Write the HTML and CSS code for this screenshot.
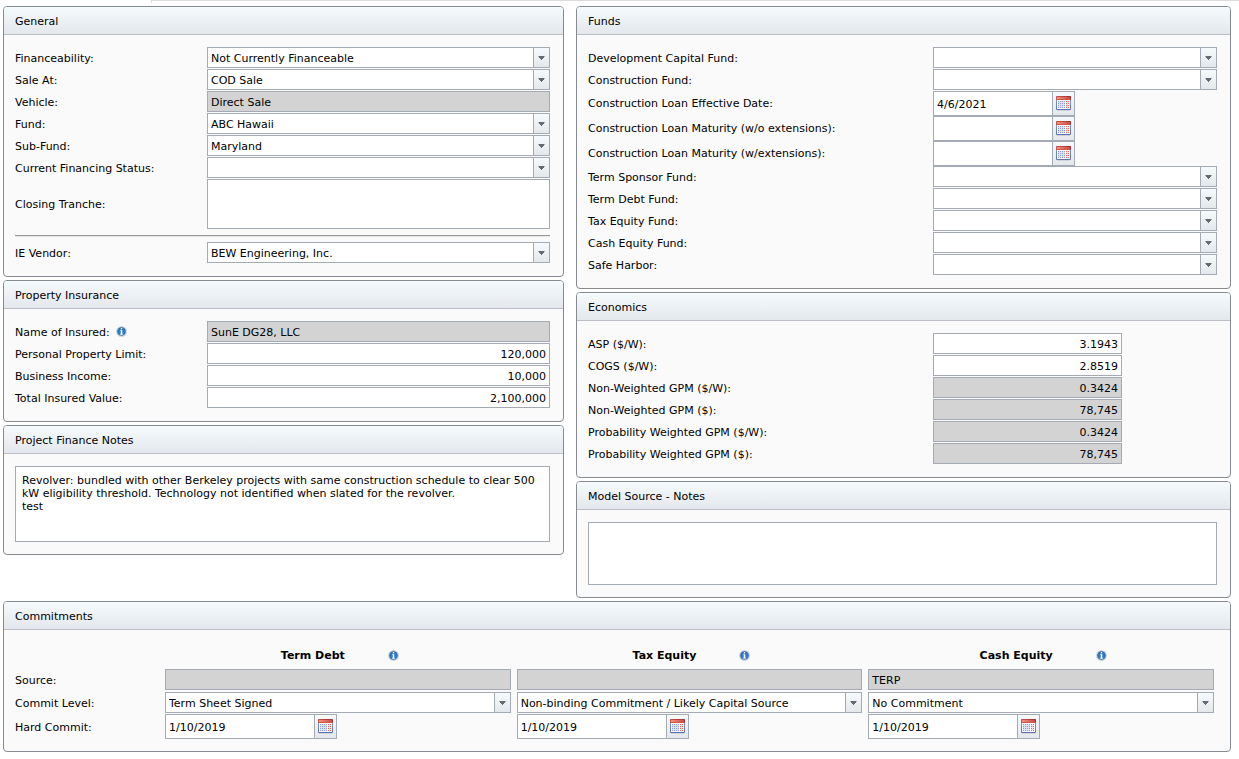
FILE: index.html
```html
<!DOCTYPE html>
<html lang="en">
<head>
    <meta charset="UTF-8">
    <meta name="viewport" content="width=device-width, initial-scale=1.0">
    <title>Project Finance</title>
    <link rel="stylesheet" href="styles.css">
</head>
<body>
    <!-- Shared icons -->
    <svg class="sprite" aria-hidden="true">
        <defs>
            <linearGradient id="calTop" x1="0" y1="0" x2="1" y2="0">
                <stop offset="0" stop-color="#cf5248" />
                <stop offset="1" stop-color="#a52d2d" />
            </linearGradient>
            <linearGradient id="calBand" x1="0" y1="0" x2="1" y2="0">
                <stop offset="0" stop-color="#ee9384" />
                <stop offset="1" stop-color="#cb4a42" />
            </linearGradient>
            <linearGradient id="calSide" x1="0" y1="0" x2="0" y2="1">
                <stop offset="0" stop-color="#8fa3d6" />
                <stop offset="1" stop-color="#5c70ae" />
            </linearGradient>
            <radialGradient id="infoFill" cx="0.5" cy="0.6" r="0.6">
                <stop offset="0" stop-color="#3f93e0" />
                <stop offset="1" stop-color="#2462ac" />
            </radialGradient>
        </defs>
        <symbol id="calendar" viewBox="0 0 15 15">
            <rect y="14" x="1" width="13" height="1" fill="#cfd2d8" />
            <rect width="15" height="14" rx="1" fill="url(#calSide)" />
            <rect x="1" y="4" width="13" height="9" fill="#f8faff" />
            <rect x="2" y="5" width="7" height="7" fill="#dbe4f4" />
            <rect x="10" y="5" width="3" height="7" fill="#fbe3dc" />
            <path d="M2 5.5h7M2 7.5h7M2 9.5h7M2 11.5h7" stroke="#8d9dcb" stroke-dasharray="1" />
            <path d="M10 5.5h3M10 7.5h3M10 9.5h3M10 11.5h3" stroke="#ee6655" stroke-dasharray="1" />
            <rect width="15" height="4" rx="1" fill="url(#calTop)" />
            <rect x="1" y="1" width="13" height="2" fill="url(#calBand)" />
            <rect x="1" y="3" width="13" height="1" fill="#d65748" />
        </symbol>
        <symbol id="info" viewBox="0 0 11 11">
            <circle cx="5.5" cy="5.5" r="5.5" fill="#d3d5d8" />
            <circle cx="5.5" cy="5.5" r="4.3" fill="url(#infoFill)" />
            <rect x="4.8" y="2" width="1.4" height="1.4" fill="#fff" />
            <path d="M4.2 4.2h2v3.6h.6v.9H4.2v-.9h.6V5h-.6z" fill="#fff" />
        </symbol>
    </svg>

    <div class="tab-edge"></div>

    <form class="page">
        <div class="columns">
            <div class="column">
                <section class="panel">
                    <h2>General</h2>
                    <div class="panel-body">
                        <div class="row">
                            <label for="financeability">Financeability:</label>
                            <select id="financeability"><option>Not Currently Financeable</option></select>
                        </div>
                        <div class="row">
                            <label for="saleAt">Sale At:</label>
                            <select id="saleAt"><option>COD Sale</option></select>
                        </div>
                        <div class="row">
                            <label for="vehicle">Vehicle:</label>
                            <input type="text" id="vehicle" value="Direct Sale" readonly>
                        </div>
                        <div class="row">
                            <label for="fund">Fund:</label>
                            <select id="fund"><option>ABC Hawaii</option></select>
                        </div>
                        <div class="row">
                            <label for="subFund">Sub-Fund:</label>
                            <select id="subFund"><option>Maryland</option></select>
                        </div>
                        <div class="row">
                            <label for="financingStatus">Current Financing Status:</label>
                            <select id="financingStatus"><option></option></select>
                        </div>
                        <div class="row">
                            <label for="closingTranche">Closing Tranche:</label>
                            <textarea id="closingTranche" class="tranche"></textarea>
                        </div>
                        <hr>
                        <div class="row">
                            <label for="ieVendor">IE Vendor:</label>
                            <select id="ieVendor"><option>BEW Engineering, Inc.</option></select>
                        </div>
                    </div>
                </section>

                <section class="panel">
                    <h2>Property Insurance</h2>
                    <div class="panel-body">
                        <div class="row">
                            <label for="insured">Name of Insured: <svg class="info"><use href="#info" /></svg></label>
                            <input type="text" id="insured" value="SunE DG28, LLC" readonly>
                        </div>
                        <div class="row">
                            <label for="propertyLimit">Personal Property Limit:</label>
                            <input type="text" id="propertyLimit" class="number" value="120,000">
                        </div>
                        <div class="row">
                            <label for="businessIncome">Business Income:</label>
                            <input type="text" id="businessIncome" class="number" value="10,000">
                        </div>
                        <div class="row">
                            <label for="insuredValue">Total Insured Value:</label>
                            <input type="text" id="insuredValue" class="number" value="2,100,000">
                        </div>
                    </div>
                </section>

                <section class="panel">
                    <h2 id="financeNotesTitle">Project Finance Notes</h2>
                    <div class="panel-body">
                        <textarea class="finance-notes" aria-labelledby="financeNotesTitle">Revolver: bundled with other Berkeley projects with same construction schedule to clear 500 kW eligibility threshold. Technology not identified when slated for the revolver.
test</textarea>
                    </div>
                </section>
            </div>

            <div class="column column-wide">
                <section class="panel">
                    <h2>Funds</h2>
                    <div class="panel-body">
                        <div class="row">
                            <label for="devFund">Development Capital Fund:</label>
                            <select id="devFund"><option></option></select>
                        </div>
                        <div class="row">
                            <label for="constructionFund">Construction Fund:</label>
                            <select id="constructionFund"><option></option></select>
                        </div>
                        <div class="row row-date">
                            <label for="loanEffective">Construction Loan Effective Date:</label>
                            <div class="date">
                                <input type="text" id="loanEffective" value="4/6/2021">
                                <button type="button" aria-label="Pick date"><svg><use href="#calendar" /></svg></button>
                            </div>
                        </div>
                        <div class="row row-date">
                            <label for="maturityWithout">Construction Loan Maturity (w/o extensions):</label>
                            <div class="date">
                                <input type="text" id="maturityWithout">
                                <button type="button" aria-label="Pick date"><svg><use href="#calendar" /></svg></button>
                            </div>
                        </div>
                        <div class="row row-date">
                            <label for="maturityWith">Construction Loan Maturity (w/extensions):</label>
                            <div class="date">
                                <input type="text" id="maturityWith">
                                <button type="button" aria-label="Pick date"><svg><use href="#calendar" /></svg></button>
                            </div>
                        </div>
                        <div class="row">
                            <label for="sponsorFund">Term Sponsor Fund:</label>
                            <select id="sponsorFund"><option></option></select>
                        </div>
                        <div class="row">
                            <label for="debtFund">Term Debt Fund:</label>
                            <select id="debtFund"><option></option></select>
                        </div>
                        <div class="row">
                            <label for="taxFund">Tax Equity Fund:</label>
                            <select id="taxFund"><option></option></select>
                        </div>
                        <div class="row">
                            <label for="cashFund">Cash Equity Fund:</label>
                            <select id="cashFund"><option></option></select>
                        </div>
                        <div class="row">
                            <label for="safeHarbor">Safe Harbor:</label>
                            <select id="safeHarbor"><option></option></select>
                        </div>
                    </div>
                </section>

                <section class="panel economics">
                    <h2>Economics</h2>
                    <div class="panel-body">
                        <div class="row">
                            <label for="asp">ASP ($/W):</label>
                            <input type="text" id="asp" class="number" value="3.1943">
                        </div>
                        <div class="row">
                            <label for="cogs">COGS ($/W):</label>
                            <input type="text" id="cogs" class="number" value="2.8519">
                        </div>
                        <div class="row">
                            <label for="gpmWatt">Non-Weighted GPM ($/W):</label>
                            <input type="text" id="gpmWatt" class="number" value="0.3424" readonly>
                        </div>
                        <div class="row">
                            <label for="gpm">Non-Weighted GPM ($):</label>
                            <input type="text" id="gpm" class="number" value="78,745" readonly>
                        </div>
                        <div class="row">
                            <label for="probGpmWatt">Probability Weighted GPM ($/W):</label>
                            <input type="text" id="probGpmWatt" class="number" value="0.3424" readonly>
                        </div>
                        <div class="row">
                            <label for="probGpm">Probability Weighted GPM ($):</label>
                            <input type="text" id="probGpm" class="number" value="78,745" readonly>
                        </div>
                    </div>
                </section>

                <section class="panel">
                    <h2 id="modelNotesTitle">Model Source - Notes</h2>
                    <div class="panel-body">
                        <textarea class="model-notes" aria-labelledby="modelNotesTitle"></textarea>
                    </div>
                </section>
            </div>
        </div>

        <section class="panel commitments">
            <h2>Commitments</h2>
            <div class="panel-body">
                <table>
                    <thead>
                        <tr>
                            <td></td>
                            <th id="termDebt" scope="col"><span>Term Debt <svg class="info"><use href="#info" /></svg></span></th>
                            <th id="taxEquity" scope="col"><span>Tax Equity <svg class="info"><use href="#info" /></svg></span></th>
                            <th id="cashEquity" scope="col"><span>Cash Equity <svg class="info"><use href="#info" /></svg></span></th>
                        </tr>
                    </thead>
                    <tbody>
                        <tr class="source">
                            <th id="source" scope="row">Source:</th>
                            <td><input type="text" aria-labelledby="termDebt source" readonly></td>
                            <td><input type="text" aria-labelledby="taxEquity source" readonly></td>
                            <td><input type="text" aria-labelledby="cashEquity source" value="TERP" readonly></td>
                        </tr>
                        <tr class="level">
                            <th id="level" scope="row">Commit Level:</th>
                            <td><select aria-labelledby="termDebt level"><option>Term Sheet Signed</option></select></td>
                            <td><select aria-labelledby="taxEquity level"><option>Non-binding Commitment / Likely Capital Source</option></select></td>
                            <td><select aria-labelledby="cashEquity level"><option>No Commitment</option></select></td>
                        </tr>
                        <tr>
                            <th id="hardCommit" scope="row">Hard Commit:</th>
                            <td>
                                <div class="date">
                                    <input type="text" aria-labelledby="termDebt hardCommit" value="1/10/2019">
                                    <button type="button" aria-label="Pick date"><svg><use href="#calendar" /></svg></button>
                                </div>
                            </td>
                            <td>
                                <div class="date">
                                    <input type="text" aria-labelledby="taxEquity hardCommit" value="1/10/2019">
                                    <button type="button" aria-label="Pick date"><svg><use href="#calendar" /></svg></button>
                                </div>
                            </td>
                            <td>
                                <div class="date">
                                    <input type="text" aria-labelledby="cashEquity hardCommit" value="1/10/2019">
                                    <button type="button" aria-label="Pick date"><svg><use href="#calendar" /></svg></button>
                                </div>
                            </td>
                        </tr>
                    </tbody>
                </table>
            </div>
        </section>
    </form>
</body>
</html>
```
FILE: styles.css
```css
* {
    box-sizing: border-box;
}
body {
    margin: 0;
    background: #fff;
    color: #000;
    font: 11px/13px Verdana, "DejaVu Sans", sans-serif;
}
.sprite {
    display: block;
    width: 0;
    height: 0;
}
.tab-edge {
    height: 3px;
    margin-left: 151px;
    border-top: 1px solid #dcdcdc;
    border-left: 1px solid #dcdcdc;
}
.page {
    display: flex;
    flex-direction: column;
    gap: 3px;
    padding: 3px 8px 7px 3px;
}
.columns {
    display: grid;
    grid-template-columns: 561fr 655fr;
    align-items: start;
    gap: 12px;
}
.column {
    display: flex;
    flex-direction: column;
    gap: 3px;
}

/* Panels */
.panel {
    border: 1px solid #868b91;
    border-radius: 4px;
    background: #fafafa;
    overflow: hidden;
}
.panel h2 {
    margin: 0;
    padding: 8px 11px 6px;
    border-bottom: 1px solid #bbbec4;
    background: linear-gradient(#f5fafd, #e4e8ec);
    font-size: 11px;
    font-weight: normal;
    line-height: 13px;
}
.panel-body {
    padding: 12px 13px 12px 11px;
}
.row {
    display: grid;
    grid-template-columns: 192px 1fr;
    align-items: center;
    padding-bottom: 1px;
}
.column-wide .row {
    grid-template-columns: 345px 1fr;
}
.row label {
    padding-top: 1px;
}
.row-date {
    padding-bottom: 0;
}
.row-date label {
    padding-top: 0;
}
hr {
    height: 2px;
    margin: 5px 0;
    border: 0;
    border-top: 1px solid #979797;
    border-bottom: 1px solid #e6e6e6;
}

/* Fields */
input,
select,
textarea {
    display: block;
    width: 100%;
    height: 21px;
    margin: 0;
    padding: 1px 3px 0;
    border: 1px solid #a5abb5;
    border-radius: 0;
    background: #fff;
    color: #000;
    font: inherit;
    outline: none;
}
input[readonly] {
    background: #d3d3d3;
}
select {
    appearance: none;
    padding-right: 18px;
    background:
        url("data:image/svg+xml,%3Csvg xmlns='http://www.w3.org/2000/svg' width='7' height='4'%3E%3Cpath d='M0 0h7v1H0z' fill='%23a4aab2'/%3E%3Cpath d='M1 0h5v2H1zM2 2h3v1H2zM3 3h1v1H3z' fill='%23646b74'/%3E%3C/svg%3E") no-repeat right 4px center,
        linear-gradient(#f5fafd, #e4e8ec) no-repeat right / 15px 100%,
        linear-gradient(#a5abb5, #a5abb5) no-repeat right / 16px 100%,
        #fff;
}
textarea {
    padding: 7px 6px 6px;
    resize: none;
}
.tranche {
    height: 50px;
}
.finance-notes {
    height: 76px;
}
.model-notes {
    height: 63px;
}
.number {
    text-align: right;
}
.economics input {
    width: 189px;
}
.date {
    display: flex;
    width: 142px;
}
.date input {
    flex: 1;
    min-width: 0;
    height: 25px;
}
.date button {
    display: flex;
    align-items: center;
    justify-content: center;
    width: 22px;
    height: 25px;
    padding: 0;
    border: 1px solid #a5abb5;
    border-left: 0;
    background: linear-gradient(#f5fafd, #e4e8ec);
    cursor: pointer;
}
.date svg {
    width: 15px;
    height: 15px;
}
.info {
    width: 11px;
    height: 11px;
    vertical-align: -1px;
}
label .info {
    margin-left: 3px;
}

/* Commitments */
.commitments .panel-body {
    padding-right: 16px;
}
table {
    width: 100%;
    table-layout: fixed;
    border-collapse: collapse;
}
td,
th {
    padding: 0;
    text-align: left;
    vertical-align: middle;
}
tr > :first-child {
    width: 144px;
}
tr > :not(:first-child) {
    padding-left: 6px;
}
thead tr {
    height: 27px;
}
thead span {
    display: flex;
    align-items: center;
    justify-content: center;
    gap: 43px;
    padding-left: 4px;
}
tbody th {
    padding-top: 2px;
    font-weight: normal;
}
.source > * {
    padding-bottom: 2px;
}
.level > * {
    padding-bottom: 1px;
}
.commitments .date {
    width: 172px;
}
```
